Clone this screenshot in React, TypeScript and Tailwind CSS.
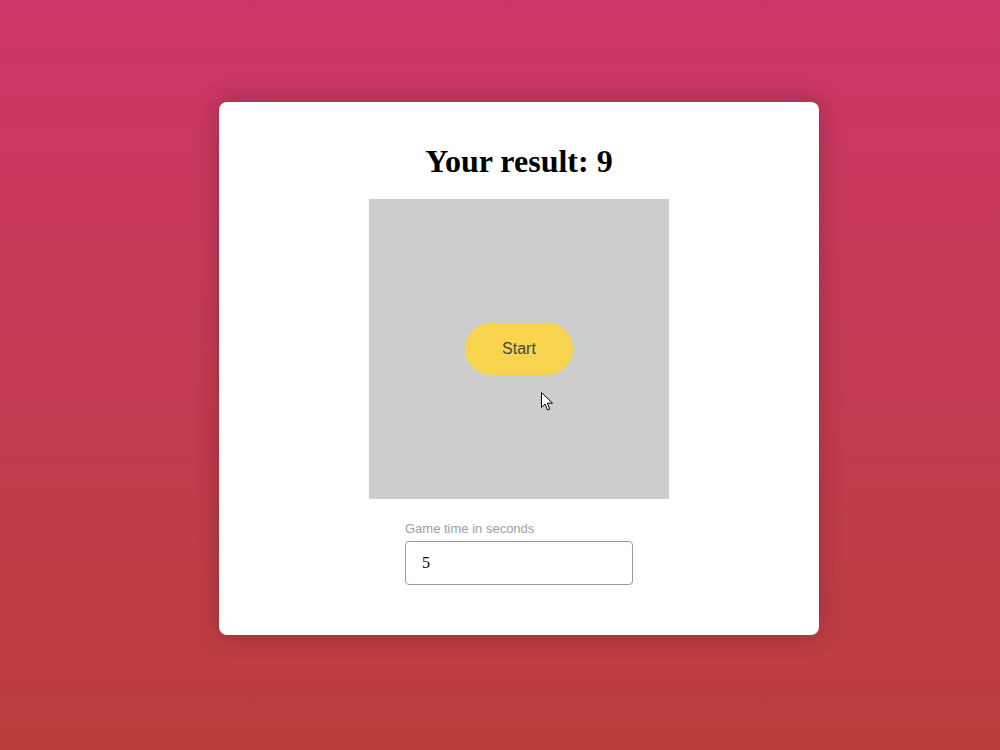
import { useState } from "react";

function Cursor() {
  return (
    <svg
      className="pointer-events-none absolute left-[172px] top-[193px]"
      width="13"
      height="20"
      viewBox="0 0 13 20"
    >
      <path
        d="M0.5 0.5 L0.5 15.5 L4 12 L6.5 18 L8.8 17 L6.3 11.2 L11.5 11.2 Z"
        fill="#fff"
        stroke="#000"
        strokeWidth="1"
        strokeLinejoin="round"
      />
    </svg>
  );
}

export default function App() {
  const [time, setTime] = useState("5");

  return (
    <div className="flex min-h-[750px] w-full justify-center bg-gradient-to-b from-[#cb3566] to-[#bc3e3b] pl-[38px] pt-[102px]">
      <div className="flex h-[533px] w-[600px] flex-col items-center rounded-lg bg-white pt-[41px] shadow-[0_0_24px_rgba(0,0,0,0.22)]">
        <h1 className="font-['Liberation_Serif',serif] text-[32px] font-bold leading-[37px] text-black">
          Your result: 9
        </h1>

        <div className="relative mt-[19px] flex h-[300px] w-[300px] items-center justify-center bg-[#cbcecd]">
          <button className="h-[52px] w-[108px] rounded-full bg-[#f9d54f] font-['Liberation_Sans',sans-serif] text-base text-[#444]">
            Start
          </button>
          <Cursor />
        </div>

        <div className="mt-[22px] flex w-[228px] flex-col">
          <label className="font-['Liberation_Sans',sans-serif] text-[13px] leading-[15px] text-[#9e9e9e]">
            Game time in seconds
          </label>
          <input
            type="number"
            value={time}
            onChange={(e) => setTime(e.target.value)}
            className="mt-[5px] h-[44px] w-full rounded-[4px] border border-[#9a9a9a] px-4 font-['Liberation_Serif',serif] text-base text-black outline-none [appearance:textfield] [&::-webkit-inner-spin-button]:appearance-none"
          />
        </div>
      </div>
    </div>
  );
}
